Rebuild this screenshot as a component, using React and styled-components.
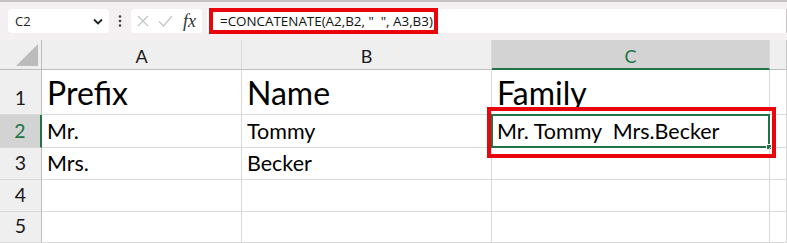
import React from "react";
import styled, { createGlobalStyle } from "styled-components";

const GREEN = "#217346";
const GRID = "#d9d9d9";

const Global = createGlobalStyle`
  html, body { margin: 0; padding: 0; background: #fff; }
  body { width: 787px; height: 243px; overflow: hidden; }
  * { box-sizing: border-box; }
`;

const Page = styled.div`
  width: 787px;
  height: 243px;
  display: flex;
  flex-direction: column;
`;

const Toolbar = styled.div`
  height: 40px;
  background: #f4f0f1;
  border-top: 2px solid #c5c1c2;
  display: flex;
  align-items: flex-start;
  padding: 7px 0 0 8px;
`;

const Box = styled.div`
  height: 24px;
  background: #fff;
  border-radius: 4px;
  display: flex;
  align-items: center;
`;

const NameBox = styled(Box)`
  width: 101px;
  padding: 0 6px 0 7px;
  justify-content: space-between;
  font-family: "Open Sans", "Noto Sans", sans-serif;
  font-size: 13px;
  color: #222;
`;

const Dots = styled.div`
  width: 22px;
  height: 24px;
  display: flex;
  align-items: center;
  justify-content: center;
`;

const FuncBox = styled(Box)`
  width: 71px;
  padding: 0 4px 0 6px;
  gap: 9px;
`;

const Fx = styled.span`
  font-family: "Liberation Serif", serif;
  font-style: italic;
  font-size: 18px;
  color: #333;
  margin-left: 1px;
`;

const FormulaBar = styled(Box)`
  flex: 1;
  margin-left: 5px;
  border-radius: 0;
  border-right: 1px solid #c9c5c6;
  padding-left: 2px;
`;

const Formula = styled.div`
  height: 26px;
  border: 4px solid #e8060c;
  padding: 0 1px 0 7px;
  display: flex;
  align-items: center;
  font-family: "Open Sans", "Noto Sans", sans-serif;
  font-size: 13.4px;
  color: #111;
  white-space: pre;
`;

const Sheet = styled.div`
  display: grid;
  grid-template-columns: 42px 200px 250px 278px 17px;
  grid-template-rows: 30px 45px 33px 32px 32px 31px;
  font-family: Lato, "Noto Sans", sans-serif;
`;

const Corner = styled.div`
  background: #efefef;
  border-right: 1px solid #bdbdbd;
  border-bottom: 1px solid #bdbdbd;
  display: flex;
  align-items: flex-end;
  justify-content: flex-end;
  padding: 0 3px 3px 0;
`;

const Triangle = styled.div`
  width: 22px;
  height: 22px;
  background: #bcbcbc;
  clip-path: polygon(100% 0, 100% 100%, 0 100%);
`;

const ColHead = styled.div`
  background: ${({ $active }) => ($active ? "#d3d3d3" : "#efefef")};
  border-right: 1px solid ${({ $edge }) => ($edge ? "#c8c8c8" : GRID)};
  border-bottom: ${({ $active }) => ($active ? `2px solid ${GREEN}` : "1px solid #bdbdbd")};
  color: ${({ $active }) => ($active ? GREEN : "#1a1a1a")};
  font-size: 18px;
  display: flex;
  align-items: center;
  justify-content: center;
  padding-top: 3px;
`;

const RowHead = styled.div`
  background: ${({ $active }) => ($active ? "#d3d3d3" : "#efefef")};
  border-right: ${({ $active }) => ($active ? `2px solid ${GREEN}` : "1px solid #bdbdbd")};
  border-bottom: 1px solid ${GRID};
  color: ${({ $active }) => ($active ? GREEN : "#1a1a1a")};
  font-size: 19.5px;
  display: flex;
  align-items: flex-end;
  justify-content: center;
  padding-bottom: 5px;
`;

const Cell = styled.div`
  position: relative;
  border-right: 1px solid ${GRID};
  border-bottom: 1px solid ${GRID};
  display: flex;
  align-items: flex-end;
  padding: 0 0 ${({ $big }) => ($big ? "2px" : "3px")} 5px;
  font-size: ${({ $big }) => ($big ? "32px" : "21.5px")};
  color: #000;
  white-space: pre;
`;

const Selection = styled.div`
  position: absolute;
  left: -1px;
  top: -1px;
  right: -1px;
  bottom: -1px;
  border: 2px solid ${GREEN};
  pointer-events: none;
`;

const Handle = styled.div`
  position: absolute;
  right: -4px;
  bottom: -4px;
  width: 6px;
  height: 6px;
  background: ${GREEN};
  border: 1px solid #fff;
`;

const Callout = styled.div`
  position: absolute;
  left: -5px;
  top: -8px;
  right: -7px;
  bottom: -11px;
  border: 4px solid #e8060c;
  z-index: 2;
`;

const Label = styled.span`
  position: relative;
  z-index: 1;
`;

const CloseIcon = () => (
  <svg width="12" height="12" viewBox="0 0 12 12">
    <path d="M1 1 L11 11 M11 1 L1 11" stroke="#c4c4c4" strokeWidth="1.3" fill="none" />
  </svg>
);

const CheckIcon = () => (
  <svg width="15" height="12" viewBox="0 0 15 12">
    <path d="M1 6.5 L5.5 11 L14 1" stroke="#c4c4c4" strokeWidth="1.3" fill="none" />
  </svg>
);

const Chevron = () => (
  <svg width="10" height="7" viewBox="0 0 10 7">
    <path d="M1 1.5 L5 5.5 L9 1.5" stroke="#222" strokeWidth="1.8" fill="none" />
  </svg>
);

const VDots = () => (
  <svg width="4" height="12" viewBox="0 0 4 12">
    <circle cx="2" cy="1.5" r="1.3" fill="#444" />
    <circle cx="2" cy="6" r="1.3" fill="#444" />
    <circle cx="2" cy="10.5" r="1.3" fill="#444" />
  </svg>
);

const rows = [
  { n: 1, big: true, a: "Prefix", b: "Name", c: "Family" },
  { n: 2, a: "Mr.", b: "Tommy", c: "Mr. Tommy  Mrs.Becker", active: true },
  { n: 3, a: "Mrs.", b: "Becker", c: "" },
  { n: 4, a: "", b: "", c: "" },
  { n: 5, a: "", b: "", c: "" },
];

export default function App() {
  return (
    <Page>
      <Global />
      <Toolbar>
        <NameBox>
          <span>C2</span>
          <Chevron />
        </NameBox>
        <Dots>
          <VDots />
        </Dots>
        <FuncBox>
          <CloseIcon />
          <CheckIcon />
          <Fx>fx</Fx>
        </FuncBox>
        <FormulaBar>
          <Formula>{'=CONCATENATE(A2,B2, "  ", A3,B3)'}</Formula>
        </FormulaBar>
      </Toolbar>
      <Sheet>
        <Corner>
          <Triangle />
        </Corner>
        <ColHead>A</ColHead>
        <ColHead>B</ColHead>
        <ColHead $active>C</ColHead>
        <ColHead $edge />
        {rows.map((r) => (
          <React.Fragment key={r.n}>
            <RowHead $active={r.active}>{r.n}</RowHead>
            <Cell $big={r.big}>{r.a}</Cell>
            <Cell $big={r.big}>{r.b}</Cell>
            <Cell $big={r.big}>
              {r.active && (
                <>
                  <Selection>
                    <Handle />
                  </Selection>
                  <Callout />
                </>
              )}
              <Label>{r.c}</Label>
            </Cell>
            <Cell />
          </React.Fragment>
        ))}
      </Sheet>
    </Page>
  );
}
